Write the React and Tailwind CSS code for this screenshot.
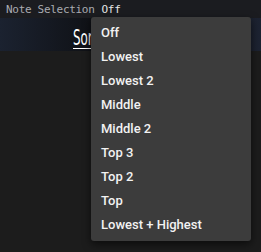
import React from "react";

const options = ["Off", "Lowest", "Lowest 2", "Middle", "Middle 2", "Top 3", "Top 2", "Top", "Lowest + Highest"];

const App = () => {
  return (
    <div className="relative w-[261px] h-[252px] overflow-hidden bg-[#1c1c1c]">
      <div className="h-[18px] bg-[#1b1c20] flex items-end pl-[6px] pb-[1px] font-['DejaVu_Sans_Mono',monospace] text-[11px] leading-[14px] tracking-[-0.3px]">
        <span className="text-[#a9abb1]">Note Selection</span>
        <span className="ml-[7px] text-[#e6e6e6]">Off</span>
      </div>
      <div className="h-[33px] bg-gradient-to-r from-[#1b2230] via-[#0b0b0c] to-[#1d2332] flex items-end pb-[2px] pl-[73px]">
        <span className="text-white text-[22px] font-['DejaVu_Sans_Condensed',sans-serif] scale-x-[0.6] origin-left border-b border-white leading-[20px]">
          Sorted
        </span>
      </div>
      <div className="absolute left-[91px] top-[17px] w-[160px] h-[224px] bg-[#3c3c3c] rounded-[3px] shadow-[0_3px_8px_rgba(0,0,0,0.6)] pt-[4px]">
        {options.map((o) => (
          <div
            key={o}
            className="h-[24px] flex items-center pl-[10px] text-[13px] font-medium text-[#f2f2f2] font-['Roboto',sans-serif]"
          >
            {o}
          </div>
        ))}
      </div>
    </div>
  );
};

export default App;
